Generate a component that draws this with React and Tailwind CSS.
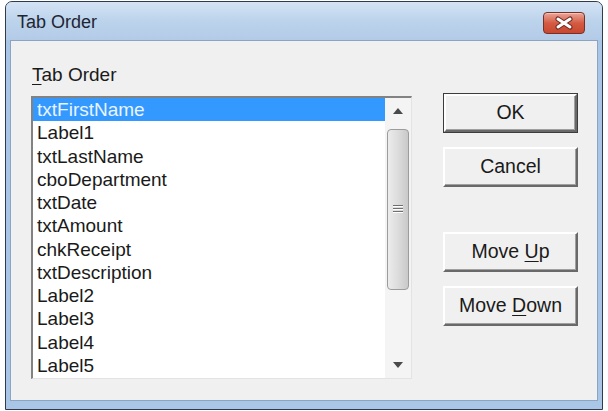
const items = [
  'txtFirstName',
  'Label1',
  'txtLastName',
  'cboDepartment',
  'txtDate',
  'txtAmount',
  'chkReceipt',
  'txtDescription',
  'Label2',
  'Label3',
  'Label4',
  'Label5'
]

const font = { fontFamily: '"Liberation Sans", Arial, sans-serif' }

const Button = ({ children, isDefault, className = '' }) => (
  <div className={`w-[135px] h-[40px] ${isDefault ? 'border border-[#3c3c3c]' : ''} ${className}`}>
    <div className="w-full h-full bg-[#f0f0f0] border-t-2 border-l-2 border-t-[#ffffff] border-l-[#ffffff] border-r-2 border-b-2 border-r-[#696969] border-b-[#696969] shadow-[inset_-1px_-1px_0_#a0a0a0] flex items-center justify-center text-[19.5px] text-[#1a1a1a]">
      {children}
    </div>
  </div>
)

const TabOrder = () => {
  return (
    <div className="w-[608px] h-[411px] bg-white pl-[5px] pt-[1px]" style={font}>
      {/* window frame */}
      <div className="w-[598px] h-[409px] border border-[#2e3c4c] rounded-t-[7px] bg-[#a9c6e6] flex flex-col px-[4px] pb-[8px]">
        {/* title bar */}
        <div className="h-[38px] -mx-[4px] px-[11px] rounded-t-[6px] bg-gradient-to-b from-[#d4e3f4] via-[#bcd3ec] to-[#b3cbe7] flex items-center justify-between">
          <span className="text-[18px] text-[#1e2633] pt-[2px]">Tab Order</span>
          <div className="w-[42px] h-[22px] mt-[3px] mr-[6px] rounded-[4px] border border-[#7a2f26] bg-gradient-to-b from-[#e8a598] via-[#d45a42] to-[#c9472f] flex items-center justify-center shadow-[inset_0_1px_0_#f2c3b8]">
            <svg width="20" height="14" viewBox="0 0 20 14">
              <path d="M4 3 L16 11 M16 3 L4 11" stroke="#6a2a22" strokeWidth="5" strokeLinecap="round" />
              <path d="M4 3 L16 11 M16 3 L4 11" stroke="#ffffff" strokeWidth="3" strokeLinecap="round" />
            </svg>
          </div>
        </div>

        {/* client area */}
        <div className="flex-1 bg-[#f0f0f0] border border-[#8aa4c2] flex pl-[20px]">
          <div className="flex flex-col pt-[20px]">
            <div className="text-[19px] text-[#1a1a1a] pl-[1px] h-[35px]">
              <span className="underline underline-offset-[3px]">T</span>ab Order
            </div>
            {/* list box */}
            <div className="w-[381px] h-[283px] bg-white border-t-2 border-l-2 border-t-[#828282] border-l-[#828282] border-b border-r border-b-[#e3e3e3] border-r-[#e3e3e3] flex">
              <div className="flex-1 flex flex-col">
                {items.map((item, i) => (
                  <div
                    key={item}
                    className={`h-[23.25px] leading-[23.25px] pl-[4px] text-[19px] ${i === 0 ? 'bg-[#3399ff] text-[#eaf4ff]' : 'text-[#1a1a1a]'}`}
                  >
                    {item}
                  </div>
                ))}
              </div>
              {/* scrollbar */}
              <div className="w-[26px] bg-[#f4f4f4] flex flex-col items-center">
                <div className="h-[26px] w-full flex items-center justify-center">
                  <svg width="10" height="6" viewBox="0 0 10 6"><path d="M0 6 L5 0 L10 6 Z" fill="#4a4a4a" /></svg>
                </div>
                <div className="mt-[5px] w-[22px] h-[161px] rounded-[4px] border border-[#9c9c9c] bg-gradient-to-r from-[#ececec] via-[#dcdcdc] to-[#c9c9c9] flex items-center justify-center">
                  <svg width="10" height="9" viewBox="0 0 10 9">
                    <path d="M0 0.5 H10 M0 3.5 H10 M0 6.5 H10" stroke="#6f6f6f" strokeWidth="1" />
                    <path d="M0 1.5 H10 M0 4.5 H10 M0 7.5 H10" stroke="#ffffff" strokeWidth="1" />
                  </svg>
                </div>
                <div className="flex-1" />
                <div className="h-[26px] w-full flex items-center justify-center">
                  <svg width="10" height="6" viewBox="0 0 10 6"><path d="M0 0 L5 6 L10 0 Z" fill="#4a4a4a" /></svg>
                </div>
              </div>
            </div>
          </div>

          {/* buttons */}
          <div className="flex flex-col ml-[31px] pt-[52px]">
            <Button isDefault>OK</Button>
            <Button className="mt-[14px]">Cancel</Button>
            <Button className="mt-[45px]">
              <span>Move <span className="underline underline-offset-[3px]">U</span>p</span>
            </Button>
            <Button className="mt-[14px]">
              <span>Move <span className="underline underline-offset-[3px]">D</span>own</span>
            </Button>
          </div>
        </div>
      </div>
    </div>
  )
}

export default TabOrder
